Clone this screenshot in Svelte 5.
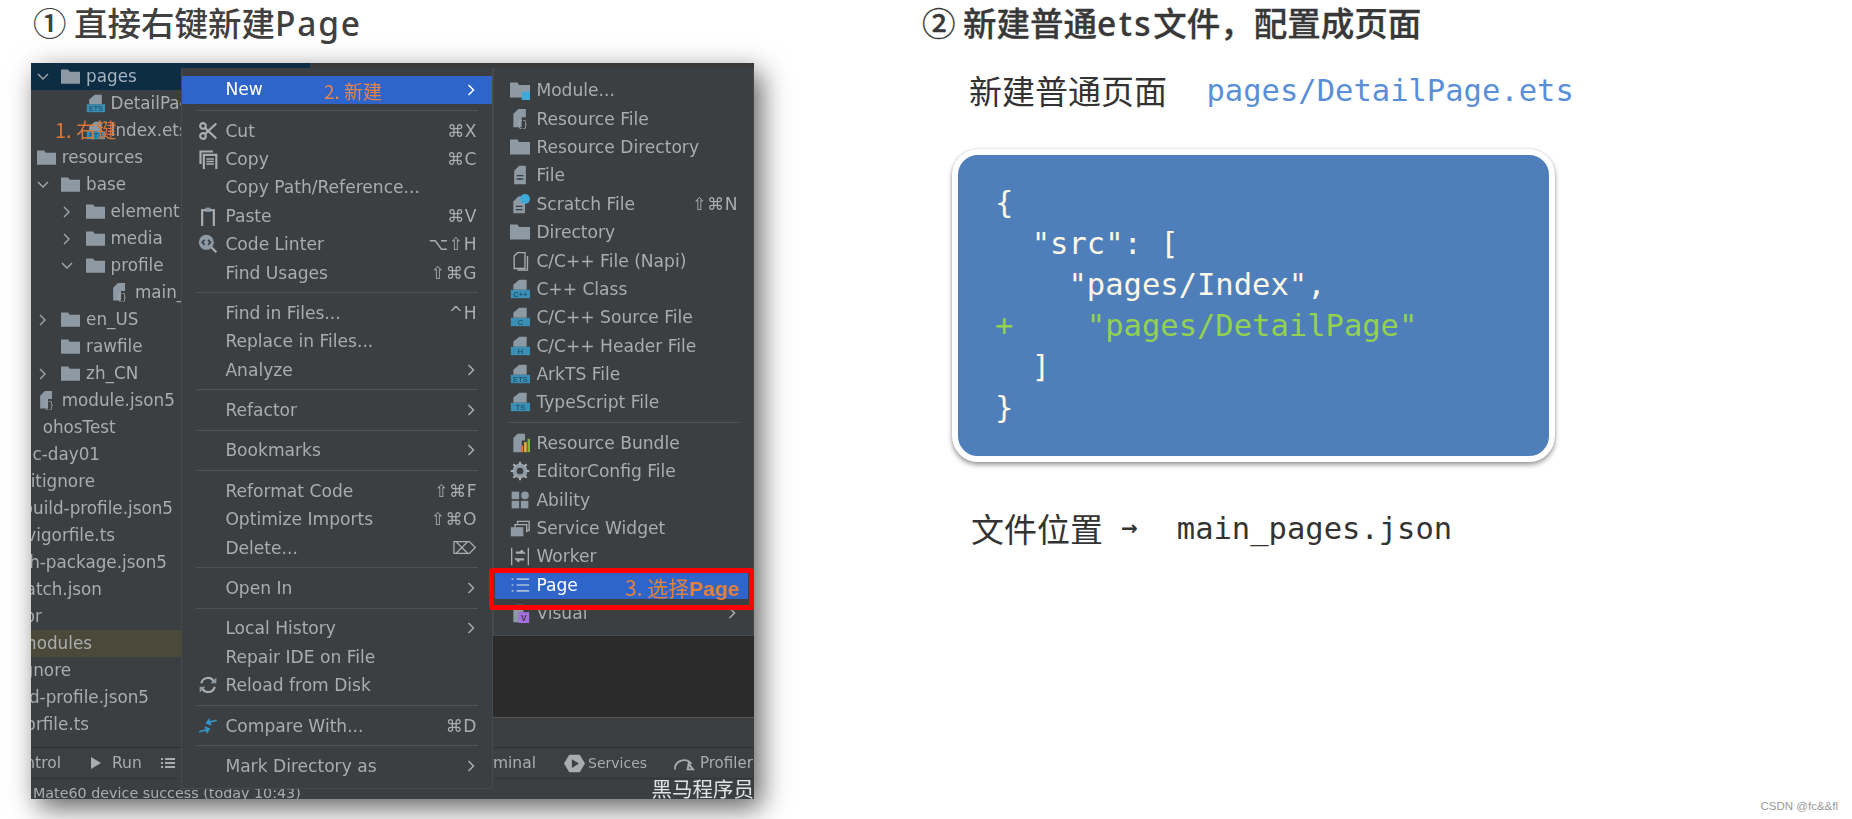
<script>
  const tree = [
    { label: 'pages', depth: 1, icon: 'folder', chev: 'down', selected: true },
    { label: 'DetailPage.ets', depth: 2, icon: 'ets' },
    { label: 'Index.ets', depth: 2, icon: 'ets' },
    { label: 'resources', depth: 0, icon: 'folder' },
    { label: 'base', depth: 1, icon: 'folder', chev: 'down' },
    { label: 'element', depth: 2, icon: 'folder', chev: 'right' },
    { label: 'media', depth: 2, icon: 'folder', chev: 'right' },
    { label: 'profile', depth: 2, icon: 'folder', chev: 'down' },
    { label: 'main_pages.json', depth: 3, icon: 'json' },
    { label: 'en_US', depth: 1, icon: 'folder', chev: 'right' },
    { label: 'rawfile', depth: 1, icon: 'folder' },
    { label: 'zh_CN', depth: 1, icon: 'folder', chev: 'right' },
    { label: 'module.json5', depth: 0, icon: 'json' },
    { label: 'ohosTest', depth: 0 },
    // these run off the left edge of the crop, so they are placed by where they end
    { label: 'c-day01', end: 69 },
    { label: '.gitignore', end: 64 },
    { label: 'build-profile.json5', end: 142 },
    { label: 'hvigorfile.ts', end: 84 },
    { label: 'oh-package.json5', end: 136 },
    { label: 'patch.json', end: 71 },
    { label: 'color', end: 11 },
    { label: 'oh_modules', end: 61, excluded: true },
    { label: '.gitignore', end: 40 },
    { label: 'build-profile.json5', end: 118 },
    { label: 'hvigorfile.ts', end: 58 },
  ];

  const sep = { sep: true };

  const mainMenu = [
    { label: 'New', arrow: true, active: true, note: '2. 新建' },
    sep,
    { label: 'Cut', icon: 'cut', key: '⌘X' },
    { label: 'Copy', icon: 'copy', key: '⌘C' },
    { label: 'Copy Path/Reference...' },
    { label: 'Paste', icon: 'paste', key: '⌘V' },
    { label: 'Code Linter', icon: 'linter', key: '⌥⇧H' },
    { label: 'Find Usages', key: '⇧⌘G' },
    sep,
    { label: 'Find in Files...', key: '^H' },
    { label: 'Replace in Files...' },
    { label: 'Analyze', arrow: true },
    sep,
    { label: 'Refactor', arrow: true },
    sep,
    { label: 'Bookmarks', arrow: true },
    sep,
    { label: 'Reformat Code', key: '⇧⌘F' },
    { label: 'Optimize Imports', key: '⇧⌘O' },
    { label: 'Delete...', key: '⌦' },
    sep,
    { label: 'Open In', arrow: true },
    sep,
    { label: 'Local History', arrow: true },
    { label: 'Repair IDE on File' },
    { label: 'Reload from Disk', icon: 'reload' },
    sep,
    { label: 'Compare With...', icon: 'compare', key: '⌘D' },
    sep,
    { label: 'Mark Directory as', arrow: true },
  ];

  const subMenu = [
    { label: 'Module...', icon: 'module' },
    { label: 'Resource File', icon: 'json' },
    { label: 'Resource Directory', icon: 'folder' },
    { label: 'File', icon: 'file' },
    { label: 'Scratch File', icon: 'scratch', key: '⇧⌘N' },
    { label: 'Directory', icon: 'folder' },
    { label: 'C/C++ File (Napi)', icon: 'cfile' },
    { label: 'C++ Class', icon: 'cpp' },
    { label: 'C/C++ Source File', icon: 'c' },
    { label: 'C/C++ Header File', icon: 'h' },
    { label: 'ArkTS File', icon: 'ets' },
    { label: 'TypeScript File', icon: 'ts' },
    sep,
    { label: 'Resource Bundle', icon: 'bundle' },
    { label: 'EditorConfig File', icon: 'gear' },
    { label: 'Ability', icon: 'ability' },
    { label: 'Service Widget', icon: 'widget' },
    { label: 'Worker', icon: 'worker' },
    { label: 'Page', icon: 'list', active: true },
    { label: 'Visual', icon: 'visual', arrow: true },
  ];

  const labelled = { ets: 'ETS', cpp: 'C++', c: 'C', h: 'H', ts: 'TS' };
</script>

{#snippet ico(name)}
  <svg class="ico" viewBox="0 0 24 24">
    {#if name === 'folder'}
      <path class="g" d="M0 3h9l2 3h13v15H0z" />
    {:else if name === 'module'}
      <path class="g" d="M0 3h9l2 3h13v15H0z" />
      <rect x="14" y="14" width="10" height="10" fill="#3fa9d8" />
    {:else if labelled[name]}
      <path class="g" d="M11 1h9v12H4V7z" />
      <rect x="1" y="13" width="23" height="10" fill="#3b8fb5" />
      <text x="12.5" y="21.6" class="tag">{labelled[name]}</text>
    {:else if name === 'json'}
      <path class="g" d="M10 0h9v10h-5v12H4V6z" />
      <text x="15" y="21" class="brace">{'{}'}</text>
    {:else if name === 'file'}
      <path class="g" d="M11 1h8v22H5V7z" />
      <path class="d" d="M8 12h8v1.6H8zM8 16h8v1.6H8z" />
    {:else if name === 'scratch'}
      <path class="g" d="M10 3h8v20H4V9z" />
      <path class="d" d="M7 14h8v1.6H7zM7 18h8v1.6H7z" />
      <circle cx="18" cy="6" r="6" fill="#3fa9d8" />
    {:else if name === 'cfile'}
      <path class="line" d="M9 2h9v19H5V6zM21 6v17H9" />
      <text x="11.5" y="17" class="tag dark">C</text>
    {:else if name === 'bundle'}
      <path class="g" d="M9 1h9v8h-4v14H4V6z" />
      <rect x="13" y="15" width="3" height="8" fill="#e0722a" />
      <rect x="17" y="11" width="3" height="12" fill="#e8b63a" />
      <rect x="21" y="7" width="3" height="16" fill="#7fb342" />
    {:else if name === 'gear'}
      <circle cx="12" cy="12" r="6.5" fill="none" stroke="#8d9aa3" stroke-width="5" />
      <path class="line thick" d="M12 1v4M12 19v4M1 12h4M19 12h4M4 4l3 3M17 17l3 3M20 4l-3 3M7 17l-3 3" />
    {:else if name === 'ability'}
      <rect class="g" x="2" y="2" width="9" height="9" />
      <circle class="g" cx="18" cy="6.5" r="4.6" />
      <rect class="g" x="2" y="13" width="9" height="9" />
      <rect class="g" x="13" y="13" width="9" height="9" />
    {:else if name === 'widget'}
      <path class="line" d="M9 7V4h14v11h-3M6 11V8h14v9" />
      <rect class="g" x="1" y="11" width="15" height="11" />
    {:else if name === 'worker'}
      <path class="line" d="M2 2v21M22 2v21" />
      <path class="line thick" d="M7 8h9l-3-3M17 16H8l3 3" />
    {:else if name === 'list'}
      <path class="blu" d="M2 4h2v2H2zM8 4h15v2H8zM2 11h2v2H2zM8 11h15v2H8zM2 18h2v2H2zM8 18h15v2H8z" />
    {:else if name === 'visual'}
      <path class="g" d="M8 2h8v9H4V6zM4 11h8v12H4z" />
      <rect x="10" y="11" width="13" height="13" fill="#a56fe0" />
      <text x="16.5" y="21.5" class="tag dark">V</text>
    {:else if name === 'cut'}
      <circle class="line thick" cx="6" cy="6" r="3.4" />
      <circle class="line thick" cx="6" cy="18" r="3.4" />
      <path class="line thick" d="M8.5 8.5L22 21M8.5 15.5L22 3" />
    {:else if name === 'copy'}
      <path class="line thick" d="M3 18V3h15" />
      <rect class="line thick" x="7" y="7" width="15" height="15" />
      <path class="line" d="M10 12h9M10 15h9M10 18h9" />
    {:else if name === 'paste'}
      <rect class="line thick" x="5" y="5" width="14" height="17" />
      <rect class="g" x="9" y="2" width="6" height="5" />
    {:else if name === 'linter'}
      <circle class="g" cx="10" cy="10" r="9" />
      <path class="d-line" d="M8 7l-3 3 3 3M12 7l3 3-3 3" />
      <path class="line thick" d="M16 16l6 6" />
    {:else if name === 'reload'}
      <path class="line thick" d="M4 10a8 8 0 0 1 15-2M20 14a8 8 0 0 1-15 2" />
      <path class="g" d="M22 3v7h-7zM2 21v-7h7z" />
    {:else if name === 'compare'}
      <path class="bl" d="M0 15h8v-4l6 5-6 5v-4H0zM24 9h-8v4l-6-5 6-5v4h8z" transform="rotate(-15 12 12)" />
    {/if}
  </svg>
{/snippet}

{#snippet menu(items, cls)}
  <div class="menu {cls}">
    {#each items as item}
      {#if item.sep}
        <div class="sep"></div>
      {:else}
        <div class="item" class:active={item.active}>
          <span class="slot">
            {#if item.icon}{@render ico(item.icon)}{/if}
          </span>
          <span class="label">{item.label}</span>
          {#if item.note}<span class="note">{item.note}</span>{/if}
          {#if item.key}<span class="key">{item.key}</span>{/if}
          {#if item.arrow}
            <svg class="arrow" viewBox="0 0 8 12"><path d="M1.5 1l5 5-5 5" /></svg>
          {/if}
        </div>
      {/if}
    {/each}
  </div>
{/snippet}

<div class="page">
  <section class="left">
    <h2>① 直接右键新建<span class="latin">Page</span></h2>
    <div class="shot">
      <div class="body">
        <div class="tree">
          {#each tree as node}
            {#if node.end}
              <div class="node clipped" class:excluded={node.excluded} style="width:{node.end}px">
                <span>{node.label}</span>
              </div>
            {:else}
              <div
                class="node"
                class:selected={node.selected}
                style="padding-left:{6 + node.depth * 24.4}px"
              >
                {#if node.chev === 'down'}
                  <svg class="chev" viewBox="0 0 12 12"><path d="M1 3l5 5 5-5" /></svg>
                {:else if node.chev === 'right'}
                  <svg class="chev" viewBox="0 0 12 12"><path d="M3 1l5 5-5 5" /></svg>
                {/if}
                {#if node.icon}{@render ico(node.icon)}{/if}
                <span>{node.label}</span>
              </div>
            {/if}
          {/each}
        </div>
        <div class="editor">
          <div class="tabs"></div>
          <div class="code-area"></div>
          <div class="crumbs"></div>
        </div>
      </div>
      <div class="tools">
        <div class="tool-clip"><span>Version Control</span></div>
        <svg class="run" viewBox="0 0 10 12"><path d="M0 0l10 6-10 6z" /></svg>
        <span class="run-label">Run</span>
        <svg class="todo" viewBox="0 0 14 12"><path d="M0 1h2v2H0zM4 1h10v2H4zM0 5h2v2H0zM4 5h10v2H4zM0 9h2v2H0zM4 9h10v2H4z" /></svg>
        <div class="term-clip"><span>Terminal</span></div>
        <svg class="svc" viewBox="0 0 24 24">
          <path d="M6 2h12l6 10-6 10H6L0 12z" />
          <path class="cut-out" d="M9 7l8 5-8 5z" />
        </svg>
        <span class="svc-label">Services</span>
        <svg class="prof" viewBox="0 0 24 16"><path d="M2 15a10 10 0 0 1 18-6M22 15l-5-6-1 6z" /></svg>
        <span class="prof-label">Profiler</span>
      </div>
      <div class="status">Mate60 device success (today 10:43)</div>

      {@render menu(mainMenu, 'main')}
      {@render menu(subMenu, 'sub')}

      <span class="hint">1. 右键</span>
      <div class="pick">
        <span>3. 选择<b>Page</b></span>
      </div>
      <span class="brand">黑马程序员</span>
    </div>
  </section>

  <section class="right">
    <h2 class="strong">② 新建普通<span class="latin wide">ets</span>文件，配置成页面</h2>
    <div class="line sub-line">
      <span>新建普通页面</span>
      <code class="path">pages/DetailPage.ets</code>
    </div>
    <div class="card">
      <pre>{'{'}
  "src": [
    "pages/Index",
<span class="add">+    "pages/DetailPage"</span>
  ]
{'}'}</pre>
    </div>
    <div class="line loc-line">
      <span>文件位置</span>
      <span class="to">→</span>
      <code>main_pages.json</code>
    </div>
  </section>

  <span class="mark">CSDN @fc&&fl</span>
</div>

<style>
  :global(body) {
    background: #fff;
  }
  .page {
    position: relative;
    display: flex;
    width: 1852px;
    height: 819px;
    overflow: hidden;
    font-family: "Noto Sans CJK SC", sans-serif;
    color: #333;
  }
  h2 {
    margin: 0;
    height: 46px;
    font-size: 33.5px;
    font-weight: 500;
    line-height: 44px;
    color: #404040;
    white-space: nowrap;
  }
  .strong {
    color: #383838;
    -webkit-text-stroke: 0.3px #383838;
  }
  .latin {
    font-family: "Noto Sans", sans-serif;
    letter-spacing: 1.8px;
  }
  .wide {
    letter-spacing: 2.6px;
  }
  .left {
    position: relative;
    width: 922px;
    flex: none;
    padding-left: 31px;
    box-sizing: border-box;
  }
  .left h2 {
    padding-left: 2px;
  }
  .left::before {
    content: "";
    position: absolute;
    left: 31px;
    top: 63px;
    width: 723px;
    height: 736px;
    box-shadow: 7px 9px 26px rgba(0, 0, 0, 0.62);
  }
  .shot {
    position: relative;
    width: 723px;
    height: 736px;
    margin-top: 17px;
    overflow: hidden;
    background: #3c3f41;
    filter: blur(0.45px);
    font-family: "DejaVu Sans", "Noto Sans", sans-serif;
    font-size: 16.8px;
    color: #a9adb0;
  }
  .body {
    display: flex;
    height: 685px;
    border-bottom: 1px solid #2f3133;
    box-sizing: border-box;
  }
  .tree {
    width: 279px;
    flex: none;
  }
  .node {
    display: flex;
    align-items: center;
    height: 27px;
    box-sizing: border-box;
    white-space: nowrap;
  }
  .node span {
    margin-left: 5.7px;
    margin-top: -1px;
  }
  .selected {
    background: #0d2d45;
    color: #a6b4bf;
  }
  .clipped {
    justify-content: flex-end;
  }
  .clipped span {
    margin-left: 0;
  }
  .excluded {
    width: 150px !important;
    background: #4b4a3a;
    padding-right: 89px;
  }
  .chev {
    width: 12px;
    height: 12px;
    margin: 0 12.4px 0 -24.4px;
    fill: none;
    stroke: #a0a8ad;
    stroke-width: 1.4;
  }
  .editor {
    flex: 1;
    display: flex;
    flex-direction: column;
  }
  .tabs {
    height: 5px;
    background: #3a3a3a;
  }
  .code-area {
    flex: 1;
    background: #2b2b2b;
    border-bottom: 1px solid #55585a;
  }
  .crumbs {
    height: 29px;
    background: #3c3f41;
  }
  .ico {
    width: 19px;
    height: 19px;
    flex: none;
  }
  .g {
    fill: #8d9aa3;
  }
  .d {
    fill: #3c3f41;
  }
  .d-line {
    fill: none;
    stroke: #3c3f41;
    stroke-width: 2;
  }
  .line {
    fill: none;
    stroke: #a9adb0;
    stroke-width: 1.6;
  }
  .thick {
    stroke-width: 2.6;
  }
  .bl {
    fill: #3592c4;
  }
  .blu {
    fill: #a8bdd8;
  }
  .tag {
    font-family: "Liberation Sans", sans-serif;
    font-size: 9px;
    text-anchor: middle;
    fill: #143c52;
  }
  .tag.dark {
    fill: #3c3f41;
    font-size: 10px;
    font-weight: 700;
  }
  .brace {
    font-family: "Liberation Mono", monospace;
    font-size: 11px;
    text-anchor: middle;
    fill: #a9adb0;
  }
  .tools {
    display: flex;
    align-items: center;
    height: 31px;
    border-bottom: 1px solid #333537;
    box-sizing: border-box;
    background: #3d4042;
    font-size: 15.5px;
    white-space: nowrap;
  }
  .tool-clip {
    flex: none;
    width: 30px;
    display: flex;
    justify-content: flex-end;
  }
  .run {
    flex: none;
    width: 10px;
    height: 12px;
    margin-left: 30px;
    fill: #a9adb0;
  }
  .run-label {
    margin-left: 11px;
    flex: none;
    width: 37px;
  }
  .todo {
    flex: none;
    width: 14px;
    height: 12px;
    margin-left: 12px;
    fill: #a9adb0;
  }
  .term-clip {
    flex: none;
    width: 361px;
    display: flex;
    justify-content: flex-end;
  }
  .svc {
    flex: none;
    width: 21px;
    height: 21px;
    margin-left: 28px;
    fill: #a9adb0;
  }
  .cut-out {
    fill: #3d4042;
  }
  .svc-label {
    margin-left: 3px;
    flex: none;
    width: 57px;
    font-size: 14px;
  }
  .prof {
    flex: none;
    width: 22px;
    height: 16px;
    margin-left: 28px;
    fill: none;
    stroke: #a9adb0;
    stroke-width: 2;
  }
  .prof-label {
    margin-left: 5px;
    font-size: 15px;
  }
  .status {
    height: 20px;
    padding: 2px 0 0 2px;
    box-sizing: border-box;
    font-size: 14.3px;
    line-height: 24px;
    white-space: nowrap;
    overflow: hidden;
  }
  .menu {
    position: absolute;
    top: 5px;
    padding: 8px 0;
    box-sizing: border-box;
    background: #3c3f41;
    border: 1px solid #47494b;
    border-width: 0 1px 1px;
    font-size: 17.1px;
  }
  .main {
    left: 150px;
    width: 312px;
  }
  .sub {
    left: 462px;
    width: 261px;
  }
  .item {
    display: flex;
    align-items: center;
    height: 28.4px;
    padding: 0 15px 0 14px;
    white-space: nowrap;
  }
  .active {
    background: #2f65ca;
    color: #fff;
  }
  .sub .active {
    height: 26px;
    margin: 2.4px 5px 0 1px;
    padding: 0 0 3px 13px;
    box-sizing: border-box;
  }
  .slot {
    display: flex;
    justify-content: center;
    flex: none;
    width: 24px;
    margin-right: 5.4px;
  }
  .sub .slot {
    margin-right: 4.4px;
  }
  .slot .ico {
    width: 20px;
    height: 20px;
  }
  .label {
    flex: 1;
  }
  .main .active .label {
    margin-top: -2px;
  }
  .note {
    position: absolute;
    left: 142px;
    font-family: "Noto Sans CJK SC", sans-serif;
    font-size: 19px;
    color: #e8834a;
  }
  .key {
    flex: none;
    font-family: "DejaVu Sans", sans-serif;
    letter-spacing: 0.5px;
  }
  .arrow {
    flex: none;
    width: 8px;
    height: 12px;
    margin-right: 2px;
    fill: none;
    stroke: #a9adb0;
    stroke-width: 1.5;
  }
  .active .arrow {
    stroke: #fff;
  }
  .sep {
    height: 1px;
    margin: 5.5px 14px;
    background: #505254;
  }
  .hint {
    position: absolute;
    left: 24px;
    top: 53px;
    font-family: "Noto Sans CJK SC", sans-serif;
    font-size: 20px;
    line-height: 28px;
    color: #d9773b;
    white-space: nowrap;
  }
  .pick {
    position: absolute;
    left: 458px;
    top: 505px;
    width: 265px;
    height: 42px;
    padding: 0 0 0 131px;
    box-sizing: border-box;
    border: 5px solid #f00;
    border-radius: 3px;
    font-family: "Noto Sans CJK SC", sans-serif;
    font-size: 21px;
    line-height: 29px;
    color: #e0813f;
    white-space: nowrap;
  }
  .pick b {
    font-family: "Liberation Sans", sans-serif;
  }
  .brand {
    position: absolute;
    right: 0;
    bottom: -2px;
    font-family: "Noto Sans CJK SC", sans-serif;
    font-size: 20.5px;
    line-height: 26px;
    color: #e2e2e2;
    white-space: nowrap;
  }
  .right {
    flex: 1;
  }
  .line {
    display: flex;
    align-items: center;
    height: 46px;
    font-size: 33px;
    white-space: nowrap;
  }
  code,
  pre {
    font-family: "DejaVu Sans Mono", "Liberation Mono", monospace;
    font-size: 30.5px;
  }
  .sub-line {
    margin-top: 21px;
    padding-left: 47px;
  }
  .path {
    margin-left: 39.5px;
    color: #5a8fd8;
  }
  .card {
    width: 603px;
    height: 313px;
    margin: 36px 0 0 30px;
    box-sizing: border-box;
    border: 6px solid #fff;
    border-radius: 26px;
    background: #4f7fba;
    box-shadow: 0 3px 5px rgba(0, 0, 0, 0.38), 0 0 2px rgba(0, 0, 0, 0.2);
  }
  pre {
    margin: 0;
    padding: 27px 0 0 37px;
    line-height: 41px;
    color: #fdf8e6;
  }
  .add {
    color: #93d150;
  }
  .loc-line {
    margin-top: 43px;
    padding-left: 49px;
  }
  .to {
    margin-left: 18px;
    font-family: "DejaVu Sans", sans-serif;
    font-size: 20px;
    font-weight: 700;
  }
  .loc-line code {
    margin-left: 39px;
  }
  .mark {
    position: absolute;
    right: 14px;
    bottom: 7px;
    font-family: "Liberation Sans", sans-serif;
    font-size: 11.5px;
    color: #999;
  }
</style>
